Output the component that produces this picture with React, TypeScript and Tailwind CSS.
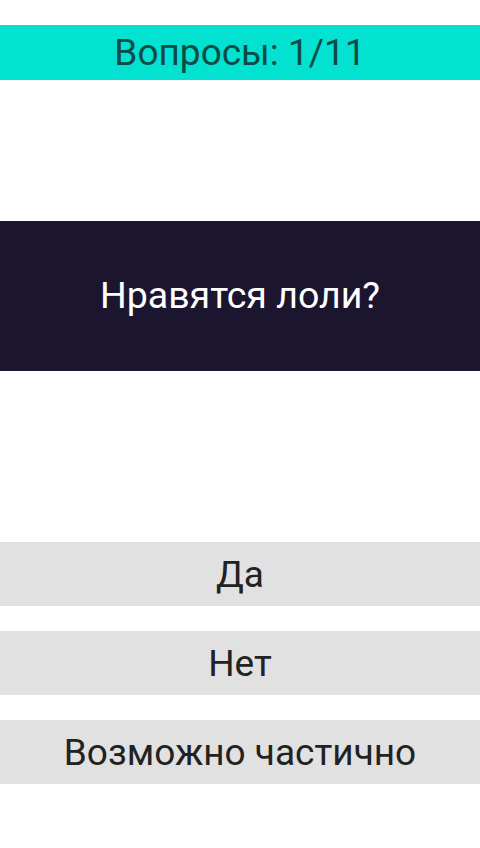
import React from "react";

const answers = ["Да", "Нет", "Возможно частично"];

export default function App() {
  return (
    <div
      className="w-[480px] h-[848px] bg-white flex flex-col"
      style={{ fontFamily: "Roboto, 'Noto Sans', sans-serif" }}
    >
      <div className="mt-[25px] h-[55px] bg-[#03e1d1] flex items-center justify-center">
        <span className="text-[37px] leading-none text-[#0d4b47]">Вопросы: 1/11</span>
      </div>

      <div className="mt-[141px] h-[150px] bg-[#1c1530] flex items-center justify-center">
        <span className="text-[37.5px] leading-none text-white">Нравятся лоли?</span>
      </div>

      <div className="mt-[171px] flex flex-col gap-[25px]">
        {answers.map((a) => (
          <button
            key={a}
            className="h-[64px] w-full bg-[#e1e1e1] flex items-center justify-center text-[37px] leading-none text-[#222222]"
          >
            {a}
          </button>
        ))}
      </div>
    </div>
  );
}
